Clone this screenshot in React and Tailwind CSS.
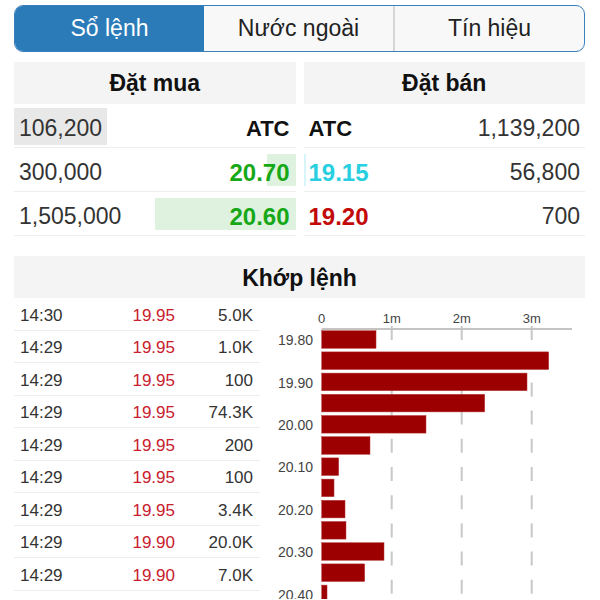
import React from 'react'

const tabs = ['Sổ lệnh', 'Nước ngoài', 'Tín hiệu']

const toneText = {
    atc: 'text-[#111] font-bold text-[22px]',
    up: 'text-[#17a817] font-bold text-[24px]',
    floor: 'text-[#28cfe0] font-bold text-[24px]',
    down: 'text-[#c20a0a] font-bold text-[24px]',
}

const toneBar = {
    up: 'bg-[#dff2df]',
    floor: 'bg-[#d6f5f8]',
    down: 'bg-[#f8dcdc]',
}

const buys = [
    { qty: '106,200', price: 'ATC', vol: 0, tone: 'atc', flash: true },
    { qty: '300,000', price: '20.70', vol: 300000, tone: 'up' },
    { qty: '1,505,000', price: '20.60', vol: 1505000, tone: 'up' },
]

const sells = [
    { price: 'ATC', qty: '1,139,200', vol: 0, tone: 'atc' },
    { price: '19.15', qty: '56,800', vol: 25000, tone: 'floor' },
    { price: '19.20', qty: '700', vol: 0, tone: 'down' },
]

const trades = [
    ['14:30', '19.95', '5.0K'],
    ['14:29', '19.95', '1.0K'],
    ['14:29', '19.95', '100'],
    ['14:29', '19.95', '74.3K'],
    ['14:29', '19.95', '200'],
    ['14:29', '19.95', '100'],
    ['14:29', '19.95', '3.4K'],
    ['14:29', '19.90', '20.0K'],
    ['14:29', '19.90', '7.0K'],
]

// volume by price step, in millions
const volumes = [0.776, 3.243, 2.933, 2.329, 1.49, 0.69, 0.243, 0.176, 0.333, 0.347, 0.89, 0.614, 0.076]
const priceLabels = ['19.80', '19.90', '20.00', '20.10', '20.20', '20.30', '20.40']

const MAX_VOL = 1505000
const BAR_MAX = 141

function BuyRow({ row }) {
    return (
        <div className="relative flex h-[44px] items-center justify-between border-b border-[#eeeeee] pl-[5px] pr-[6px]">
            {row.vol > 0 && (
                <div
                    className={`absolute right-0 top-[6px] bottom-[5px] ${toneBar[row.tone]}`}
                    style={{ width: (row.vol / MAX_VOL) * BAR_MAX }}
                />
            )}
            {row.flash ? (
                <span className="-ml-[5px] mt-[2px] flex h-[37px] items-center bg-[#e8e8e8] px-[5px] pt-[4px] text-[23px] text-[#333]">
                    {row.qty}
                </span>
            ) : (
                <span className="relative pt-[6px] text-[23px] text-[#333]">{row.qty}</span>
            )}
            <span className={`relative pt-[6px] ${toneText[row.tone]}`}>{row.price}</span>
        </div>
    )
}

function SellRow({ row }) {
    return (
        <div className="relative flex h-[44px] items-center justify-between border-b border-[#eeeeee] pl-[5px] pr-[5px]">
            {row.vol > 0 && (
                <div
                    className={`absolute left-0 top-[6px] bottom-[5px] ${toneBar[row.tone]}`}
                    style={{ width: (row.vol / MAX_VOL) * BAR_MAX }}
                />
            )}
            <span className={`relative pt-[6px] ${toneText[row.tone]}`}>{row.price}</span>
            <span className="relative pt-[6px] text-[23px] text-[#333]">{row.qty}</span>
        </div>
    )
}

function VolumeChart() {
    const x0 = 61.7
    const perM = 70
    return (
        <svg width="325" height="301" className="block">
            {[0, 1, 2, 3].map((m) => (
                <text
                    key={m}
                    x={x0 + m * perM}
                    y="20"
                    textAnchor="middle"
                    dominantBaseline="central"
                    fontSize="13"
                    fill="#444"
                >
                    {m === 0 ? '0' : `${m}m`}
                </text>
            ))}
            {[1, 2, 3].map((m) => (
                <line
                    key={m}
                    x1={x0 + m * perM}
                    x2={x0 + m * perM}
                    y1="28"
                    y2="301"
                    stroke="#c8c8c8"
                    strokeWidth="2"
                    strokeDasharray="14 14.2"
                />
            ))}
            <line x1={x0} x2="312" y1="31" y2="31" stroke="#c4c4c4" strokeWidth="2" />
            {volumes.map((v, i) => (
                <rect
                    key={i}
                    x={x0}
                    y={32.7 + i * 21.2}
                    width={v * perM}
                    height="17.6"
                    fill="#9c0000"
                    stroke="#b83a3a"
                    strokeWidth="0.5"
                />
            ))}
            {priceLabels.map((p, i) => (
                <text
                    key={p}
                    x="53"
                    y={32.7 + i * 2 * 21.2 + 9.5}
                    textAnchor="end"
                    dominantBaseline="central"
                    fontSize="14"
                    fill="#444"
                >
                    {p}
                </text>
            ))}
        </svg>
    )
}

export default function App() {
    return (
        <div className="h-[600px] w-[600px] overflow-hidden bg-white font-['Liberation_Sans',Arial,sans-serif]">
            <div className="ml-[14px] w-[571px] pt-[5px]">
                <div className="flex h-[47px] overflow-hidden rounded-[9px] border-[1.5px] border-[#3a80bd] bg-[#f8f8f8]">
                    {tabs.map((t, i) => (
                        <div
                            key={t}
                            className={
                                i === 0
                                    ? 'flex flex-1 items-center justify-center bg-[#2b7bb9] text-[23px] text-white'
                                    : i === 1
                                        ? 'flex flex-1 items-center justify-center text-[23px] text-[#222]'
                                        : 'flex flex-1 items-center justify-center border-l-2 border-[#d6d6d6] text-[23px] text-[#222]'
                            }
                        >
                            {t}
                        </div>
                    ))}
                </div>

                <div className="mt-[10px] flex gap-[8px]">
                    <div className="flex-1">
                        <div className="flex h-[42px] items-center justify-center bg-[#f4f4f4] text-[23px] font-bold text-[#111]">
                            Đặt mua
                        </div>
                        {buys.map((r, i) => <BuyRow key={i} row={r} />)}
                    </div>
                    <div className="flex-1">
                        <div className="flex h-[42px] items-center justify-center bg-[#f4f4f4] text-[23px] font-bold text-[#111]">
                            Đặt bán
                        </div>
                        {sells.map((r, i) => <SellRow key={i} row={r} />)}
                    </div>
                </div>

                <div className="mt-[20px] flex h-[42px] items-center justify-center bg-[#f4f4f4] pt-[3px] text-[23px] font-bold text-[#111]">
                    Khớp lệnh
                </div>

                <div className="flex">
                    <div className="w-[246px]">
                        {trades.map(([time, price, vol], i) => (
                            <div key={i} className="flex h-[32.5px] items-center border-b border-[#eeeeee] pl-[6px] pr-[7px] pt-[3px] text-[17px]">
                                <span className="flex-1 text-[#333]">{time}</span>
                                <span className="w-[60px] text-right text-[#c8202c]">{price}</span>
                                <span className="w-[78px] text-right text-[#333]">{vol}</span>
                            </div>
                        ))}
                    </div>
                    <div className="flex-1">
                        <VolumeChart />
                    </div>
                </div>
            </div>
        </div>
    )
}
